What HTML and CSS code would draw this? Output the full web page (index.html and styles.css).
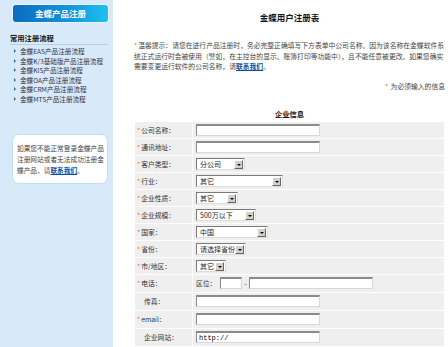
FILE: index.html
```html
<!DOCTYPE html>
<html lang="zh-CN">
<head>
    <meta charset="UTF-8">
    <title>金蝶用户注册表</title>
    <link rel="stylesheet" href="styles.css">
</head>
<body>
    <div class="page">
        <div class="sidebar">
            <div class="side-head">金蝶产品注册</div>
            <h3>常用注册流程</h3>
            <ul class="flow-list">
                <li>金蝶EAS产品注册流程</li>
                <li>金蝶K/3基础版产品注册流程</li>
                <li>金蝶KIS产品注册流程</li>
                <li>金蝶OA产品注册流程</li>
                <li>金蝶CRM产品注册流程</li>
                <li>金蝶MTS产品注册流程</li>
            </ul>
            <div class="help-box">如果您不能正常登录金蝶产品注册网站或者无法成功注册金蝶产品，请<a href="#">联系我们</a>。</div>
        </div>

        <div class="main">
            <h2>金蝶用户注册表</h2>
            <p class="notice"><span class="star">*</span>温馨提示：请您在进行产品注册时，务必完整正确填写下方表单中公司名称。因为该名称在金蝶软件系统正式运行时会被使用（譬如，在主控台的显示、账簿打印等功能中），且不能任意被更改。如果您确实需要变更运行软件的公司名称，请<a href="#">联系我们</a>。</p>
            <p class="required"><span class="star">*</span> 为必须输入的信息</p>
            <h4>企业信息</h4>
            <table class="form-table">
                <tr><th><span class="star">*</span>公司名称：</th><td><input class="txt"></td></tr>
                <tr><th><span class="star">*</span>通讯地址：</th><td><input class="txt"></td></tr>
                <tr><th><span class="star">*</span>客户类型：</th><td><span class="sel w49">分公司<i></i></span></td></tr>
                <tr><th><span class="star">*</span>行业：</th><td><span class="sel w87">其它<i></i></span></td></tr>
                <tr><th><span class="star">*</span>企业性质：</th><td><span class="sel w42">其它<i></i></span></td></tr>
                <tr><th><span class="star">*</span>企业规模：</th><td><span class="sel w60">500万以下<i></i></span></td></tr>
                <tr><th><span class="star">*</span>国家：</th><td><span class="sel w72">中国<i></i></span></td></tr>
                <tr><th><span class="star">*</span>省份：</th><td><span class="sel w50">请选择省份<i></i></span></td></tr>
                <tr><th><span class="star">*</span>市/地区：</th><td><span class="sel w30">其它<i></i></span></td></tr>
                <tr class="tall"><th><span class="star">*</span>电话：</th><td><span class="area-label">区位：</span><input class="txt area"><span class="dash">-</span><input class="txt"></td></tr>
                <tr class="tall"><th><span class="nostar"></span>传真：</th><td><input class="txt"></td></tr>
                <tr class="tall"><th><span class="star">*</span>email：</th><td><input class="txt"></td></tr>
                <tr class="tall"><th><span class="nostar"></span>企业网站：</th><td><input class="txt mono" value="http://"></td></tr>
            </table>
        </div>
    </div>
</body>
</html>
```

FILE: styles.css
```css
body {
    margin: 0;
    font-family: "Noto Sans CJK SC", "DejaVu Sans", sans-serif;
    font-size: 7px;
    color: #333;
    background-color: #fff;
}
.page {
    display: flex;
    min-height: 347px;
}
.sidebar {
    width: 113px;
    flex-shrink: 0;
    background-color: #d8eaf9;
    padding-top: 5px;
    box-sizing: border-box;
}
.side-head {
    margin: 0 5px 0 13px;
    height: 17px;
    line-height: 17px;
    text-align: center;
    color: #fff;
    font-size: 8.5px;
    font-weight: bold;
    border-radius: 3px;
    background: linear-gradient(to right, #0b6cbe, #1496dc 60%, #1fc0ee);
    box-shadow: 0 0 0 1px #e8f6ff;
}
.sidebar h3 {
    margin: 11px 5px 0 10px;
    padding-bottom: 1px;
    font-size: 7.3px;
    line-height: 10px;
    color: #111;
    border-bottom: 1px solid #b8cfe3;
}
.flow-list {
    list-style: none;
    margin: 2px 0 0 0;
    padding: 0 0 0 14px;
}
.flow-list li {
    height: 9.5px;
    line-height: 9.5px;
    font-size: 6.6px;
    color: #334;
    white-space: nowrap;
}
.flow-list li::before {
    content: "";
    display: inline-block;
    border-left: 2px solid #2a70b8;
    border-top: 2px solid transparent;
    border-bottom: 2px solid transparent;
    margin-right: 4px;
    vertical-align: 1px;
}
.help-box {
    margin: 30px 5px 0 12px;
    padding: 8px 1px 7px 4px;
    background-color: #fff;
    border: 1px solid #c6dcef;
    border-radius: 7px;
    font-size: 6.7px;
    line-height: 11px;
    color: #444;
}
a {
    color: #0a4d9c;
    font-weight: bold;
}
.main {
    flex: 1;
    padding: 0 3px 0 21px;
}
.main h2 {
    margin: 12px 0 0 0;
    font-size: 8.5px;
    line-height: 11px;
    text-align: center;
    color: #111;
}
.notice {
    margin: 17px 0 0 0;
    font-size: 6.8px;
    line-height: 10.5px;
    color: #444;
}
.star {
    color: #f60;
    margin-right: 1px;
}
.required {
    margin: 9px 0 0 0;
    text-align: right;
    font-size: 6.8px;
    line-height: 10px;
    color: #444;
}
.main h4 {
    margin: 18px 0 2px 0;
    font-size: 7.3px;
    line-height: 10px;
    text-align: center;
    color: #111;
}
.form-table {
    width: 100%;
    border-collapse: collapse;
}
.form-table th,
.form-table td {
    background-color: #efefef;
    border: 1px solid #fff;
    height: 16px;
    line-height: 10px;
    padding: 0;
    font-weight: normal;
    text-align: left;
    font-size: 6.8px;
    color: #333;
    white-space: nowrap;
}
.form-table tr.tall th,
.form-table tr.tall td {
    height: 17px;
}
.form-table th {
    width: 55px;
    padding-left: 2px;
}
.form-table td {
    padding-left: 3px;
}
.nostar {
    display: inline-block;
    width: 7px;
}
.txt {
    width: 124px;
    height: 12px;
    box-sizing: border-box;
    padding: 0 2px;
    border: 1px solid #d8d8d8;
    border-top: 2px solid #8a8a8a;
    border-left: 1px solid #8a8a8a;
    background-color: #fff;
    font-size: 7px;
    vertical-align: middle;
}
.txt.area {
    width: 22px;
}
.area-label {
    display: inline-block;
    width: 24px;
    vertical-align: middle;
}
.dash {
    display: inline-block;
    width: 7px;
    text-align: center;
    vertical-align: middle;
}
.txt.mono {
    font-family: "Liberation Mono", monospace;
}
.sel {
    display: inline-block;
    position: relative;
    height: 12px;
    line-height: 10px;
    box-sizing: border-box;
    padding-left: 3px;
    background-color: #fff;
    border: 1px solid #7a7a7a;
    border-right-color: #ddd;
    border-bottom-color: #ddd;
    vertical-align: middle;
    font-size: 7px;
    color: #222;
}
.sel i {
    position: absolute;
    right: 1px;
    top: 1px;
    width: 7px;
    height: 7px;
    background-color: #d4d0c8;
    border: 1px solid #fff;
    border-right-color: #666;
    border-bottom-color: #666;
}
.sel i::after {
    content: "";
    position: absolute;
    left: 1.5px;
    top: 3px;
    border-top: 2px solid #000;
    border-left: 2px solid transparent;
    border-right: 2px solid transparent;
}
.w30 { width: 30px; }
.w42 { width: 42px; }
.w49 { width: 49px; }
.w50 { width: 50px; }
.w60 { width: 60px; }
.w72 { width: 72px; }
.w87 { width: 87px; }
```
